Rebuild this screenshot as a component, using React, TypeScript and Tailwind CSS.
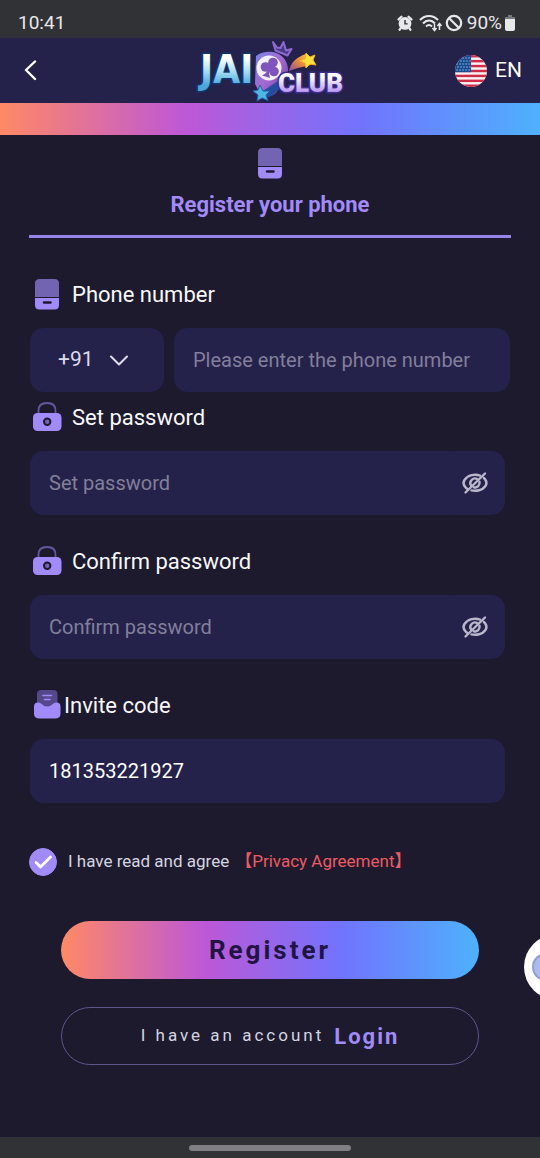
import { useState } from "react";
import type { ReactNode } from "react";

function PhoneIcon() {
  return (
    <svg viewBox="0 0 30 32" className="h-8 w-[30px] shrink-0" aria-hidden="true">
      <path d="M3 19V5.500Q3 1 7.500 1H22.500Q27 1 27 5.500V19Z" fill="#7264b0" />
      <path d="M3 20H27V27Q27 31.500 22.500 31.500H7.500Q3 31.500 3 27Z" fill="#a18bfb" />
      <path d="M12 24.500H18.500" stroke="#1c1a2c" strokeWidth="2.400" strokeLinecap="round" />
    </svg>
  );
}

function LockIcon() {
  return (
    <svg viewBox="0 0 30 32" className="h-8 w-[30px] shrink-0" aria-hidden="true">
      <path d="M6.500 13V9.500C6.500 5 9.500 2 15 2S23.500 5 23.500 9.500V13" fill="none" stroke="#6357a0" strokeWidth="1.800" />
      <rect x="1" y="12" width="28.500" height="18" rx="4.500" fill="#a18bfb" />
      <circle cx="15.200" cy="20.800" r="3.200" fill="#7264b0" stroke="#1c1a2c" strokeWidth="2" />
    </svg>
  );
}

function InviteIcon() {
  return (
    <svg viewBox="0 0 30 32" className="h-8 w-[30px] shrink-0" aria-hidden="true">
      <path d="M5 22V5Q5 1 9.500 1H21Q25.500 1 25.500 5V22Z" fill="#54488b" />
      <path d="M11 6.500H19.500M12.500 10.500H18" stroke="#a18bfb" strokeWidth="1.600" strokeLinecap="round" />
      <path d="M2 17.500Q2 13.500 6 13.500C10 13.500 10.500 17.500 15.200 17.500S20.500 13.500 24.500 13.500Q28.500 13.500 28.500 17.500V24.500Q28.500 29.500 23 29.500H7.500Q2 29.500 2 24.500Z" fill="#a18bfb" />
    </svg>
  );
}

function HiddenEyeIcon() {
  return (
    <svg viewBox="0 0 28 24" className="h-6 w-7" fill="none" stroke="#b9b7ca" strokeWidth="2.400" strokeLinecap="round" aria-hidden="true">
      <path d="M19 4.600C14 2.800 7 3.800 3.500 9Q1.500 12 3.500 15Q4.700 16.800 6.300 18M10.500 19.400C15 20.400 21.500 19.500 24.500 15Q26.500 12 24.500 9Q23.800 7.900 22.800 7" />
      <path d="M16.500 8.300A4.600 4.600 0 0 0 10 14.500M12.800 16.300A4.600 4.600 0 0 0 18.500 10.800" />
      <path d="M4.500 21.500L24 2.500" />
    </svg>
  );
}

function Logo() {
  return (
    <svg viewBox="0 2 160 65" className="h-[65px] w-40" role="img" aria-label="Jai Club">
      <defs>
        <linearGradient id="jai" x1="0" y1="0" x2="0" y2="1">
          <stop offset="0.250" stopColor="#ffffff" />
          <stop offset="0.550" stopColor="#a5dcf3" />
          <stop offset="0.850" stopColor="#4aa5dc" />
        </linearGradient>
        <linearGradient id="club" x1="0" y1="0" x2="0" y2="1">
          <stop offset="0.300" stopColor="#ffffff" />
          <stop offset="0.850" stopColor="#b08af0" />
        </linearGradient>
        <linearGradient id="badge" x1="0" y1="0" x2="1" y2="1">
          <stop offset="0" stopColor="#7884ec" />
          <stop offset="0.500" stopColor="#a568cf" />
          <stop offset="1" stopColor="#4d3ca0" />
        </linearGradient>
        <linearGradient id="comet" x1="1" y1="0" x2="0" y2="1">
          <stop offset="0" stopColor="#ffcf2e" />
          <stop offset="0.500" stopColor="#e78a3e" />
          <stop offset="1" stopColor="#8e4ba0" />
        </linearGradient>
      </defs>
      <path d="M63 20Q70 15 80 16C90 18 95 26 95 34C94 43 88 49 83 57Q76 63 68 59L62 48Z" fill="url(#badge)" />
      <path d="M70 55L85 45L86 53L79 60L71 62Z" fill="#284c9c" />
      <text x="7" y="47" fontFamily="'DejaVu Sans Condensed', 'DejaVu Sans', sans-serif" fontWeight="700" fontSize="39" fill="url(#jai)" stroke="#12356e" strokeWidth="3" paintOrder="stroke" strokeLinejoin="round">JAI</text>
      <circle cx="76" cy="32" r="12.500" fill="#f4efff" />
      <g fill="#8054bd">
        <circle cx="80" cy="26.500" r="4.800" />
        <circle cx="72.500" cy="31" r="4.800" />
        <circle cx="81" cy="35.500" r="4.800" />
        <path d="M76 29L80 31L76 37L77 42L69 39.500Q74 37 75 33Z" />
      </g>
      <path d="M80 6L82.500 14.500L94.500 19.500L98.500 13L93 14.500L90.500 6L87.500 12L84 11.500Z" fill="#4c3888" stroke="#8d68cf" strokeWidth="2" strokeLinejoin="round" />
      <path d="M96 35Q98 23 113 18L118 29Q107 31 96 35Z" fill="url(#comet)" />
      <path d="M113 17L117 21L122 19L120 24L123 29L117 28L113 32L112 27L107 25L112 23Z" fill="#ffe33d" stroke="#f6b323" strokeWidth="1" strokeLinejoin="round" />
      <text x="85" y="56" fontFamily="Roboto, sans-serif" fontWeight="900" fontSize="26" fill="url(#club)" stroke="#3c2d8f" strokeWidth="3" paintOrder="stroke" strokeLinejoin="round">CLUB</text>
      <path d="M67 49L70 55L77 55L73 59L75 64.500L69 62L64 65L65 59L60 55L65 54Z" fill="#4db7e3" stroke="#245fae" strokeWidth="1" strokeLinejoin="round" />
    </svg>
  );
}

const stripes = [0, 2, 4, 6, 8, 10, 12];
const stars = [3, 6, 9, 12, 15];

function FlagIcon() {
  return (
    <svg viewBox="0 0 32 32" className="size-8" aria-hidden="true">
      <defs>
        <clipPath id="disc">
          <circle cx="16" cy="16" r="16" />
        </clipPath>
      </defs>
      <g clipPath="url(#disc)">
        <rect width="32" height="32" fill="#f8f1f5" />
        {stripes.map((n) => (
          <rect key={n} y={n * 2.46} width="32" height="2.460" fill="#d02c48" />
        ))}
        <rect width="16" height="17.200" fill="#164a91" />
        {stars.map((y) =>
          stars.map((x) => <circle key={`${x}-${y}`} cx={x - (y % 2)} cy={y} r="0.700" fill="#a9cbec" />)
        )}
      </g>
    </svg>
  );
}

function StatusBar() {
  return (
    <div className="flex h-[38px] items-center justify-between bg-[#313236] pt-2 pr-6 pl-[18px] text-[#e8e8ea]">
      <span className="text-[19px] leading-6">10:41</span>
      <div className="flex items-center gap-[2px]">
        <svg viewBox="0 0 18 18" className="mr-1 size-4" aria-hidden="true">
          <path d="M1.800 5L5 2M16.200 5L13 2M4 15L3 16.500M14 15L15 16.500" stroke="currentColor" strokeWidth="2.600" strokeLinecap="round" />
          <circle cx="9" cy="9.500" r="7.200" fill="currentColor" />
          <path d="M9 5.500V10H12" fill="none" stroke="#313236" strokeWidth="1.600" />
        </svg>
        <svg viewBox="0 0 24 18" className="h-[18px] w-6" fill="none" stroke="currentColor" strokeWidth="2" aria-hidden="true">
          <path d="M1 6C6 .5 14 .5 19 6M4 9.500C7.500 5.500 12.500 5.500 16 9.500M7 12.500C9 10.500 11 10.500 13 12.500" />
          <path d="M15.500 10V16M13.500 14L15.500 16.500L17.500 14M20.500 16V10M18.500 12L20.500 9.500L22.500 12" strokeWidth="1.500" />
        </svg>
        <svg viewBox="0 0 18 18" className="size-[18px]" fill="none" stroke="currentColor" strokeWidth="2.200" aria-hidden="true">
          <circle cx="9" cy="9" r="7.200" />
          <path d="M4 4L14 14" />
        </svg>
        <span className="ml-[2px] text-[19px] leading-6">90%</span>
        <svg viewBox="0 0 12 18" className="h-[18px] w-3" aria-hidden="true">
          <path d="M4 1H8V3H11V6H1V3H4Z" fill="#77787b" />
          <path d="M1 5H11V15Q11 17 9 17H3Q1 17 1 15Z" fill="currentColor" />
        </svg>
      </div>
    </div>
  );
}

const fieldBox = "h-16 w-full rounded-[14px] bg-[#24224b] px-[19px] text-[20px] text-white outline-none placeholder:text-[#827f9a]";

function FieldLabel({ id, icon, tight, children }: { id: string; icon: ReactNode; tight?: boolean; children: ReactNode }) {
  return (
    <label htmlFor={id} className={`mb-[18px] flex h-8 items-center pl-[2px] text-[22px] text-[#f7f7fa] ${tight ? "gap-[2px]" : "gap-[10px]"}`}>
      {icon}
      {children}
    </label>
  );
}

function PasswordField({ id, label }: { id: string; label: string }) {
  const [shown, setShown] = useState(false);
  return (
    <div className="pr-[5px]">
      <FieldLabel id={id} icon={<LockIcon />}>{label}</FieldLabel>
      <div className="flex items-center rounded-[14px] bg-[#24224b] pr-4">
        <input id={id} type={shown ? "text" : "password"} placeholder={label} className={fieldBox} />
        <button type="button" aria-label="Toggle password visibility" onClick={() => setShown(!shown)}>
          <HiddenEyeIcon />
        </button>
      </div>
    </div>
  );
}

const rainbow = "bg-[linear-gradient(90deg,#ff8965_0%,#be58d6_34%,#7173fd_67%,#4eb1fd_100%)]";

export default function App() {
  return (
    <div className="relative flex min-h-screen flex-col overflow-hidden bg-[#1c1a2c] font-['Roboto',sans-serif]">
      <StatusBar />
      <header className="grid h-[65px] grid-cols-[1fr_auto_1fr] items-center bg-[#24224b] pr-[18px] pl-[23px]">
        <button type="button" aria-label="Back" className="justify-self-start">
          <svg viewBox="0 0 16 22" className="h-[22px] w-4" fill="none" stroke="#fff" strokeWidth="2.400" strokeLinecap="round" strokeLinejoin="round" aria-hidden="true">
            <path d="M12 1.500L3 10L12 19" />
          </svg>
        </button>
        <Logo />
        <button type="button" className="flex items-center gap-2 justify-self-end text-[21px] text-white">
          <FlagIcon />
          EN
        </button>
      </header>
      <div className={`h-8 ${rainbow}`} />

      <main className="flex-1 px-[30px] pt-3">
        <h1 className="-mx-px flex flex-col items-center gap-3 border-b-[3px] border-[#9684e8] pb-4 text-[22px] leading-7 font-bold text-[#a18bfb]">
          <PhoneIcon />
          Register your phone
        </h1>

        <form className="mt-10" onSubmit={(e) => e.preventDefault()}>
          <FieldLabel id="phone" icon={<PhoneIcon />}>Phone number</FieldLabel>
          <div className="flex gap-[10px]">
            <div className="relative w-[134px] shrink-0">
              <select aria-label="Country code" className="h-16 w-full appearance-none rounded-[14px] bg-[#24224b] pl-7 text-[21px] text-[#dddce8] outline-none">
                <option>+91</option>
              </select>
              <svg viewBox="0 0 20 12" className="pointer-events-none absolute top-[27px] right-9 h-3 w-5" fill="none" stroke="#dddce8" strokeWidth="2" strokeLinecap="round" strokeLinejoin="round" aria-hidden="true">
                <path d="M3 1.500L11 9.500L19 1.500" />
              </svg>
            </div>
            <input id="phone" type="tel" placeholder="Please enter the phone number" className={fieldBox} />
          </div>

          <div className="mt-[9px] flex flex-col gap-[30px]">
            <PasswordField id="password" label="Set password" />
            <PasswordField id="confirm" label="Confirm password" />
            <div className="pr-[5px]">
              <FieldLabel id="invite" icon={<InviteIcon />} tight>Invite code</FieldLabel>
              <input id="invite" type="text" defaultValue="181353221927" className={fieldBox} />
            </div>
          </div>

          <div className="-ml-px mt-11 flex h-[30px] items-center">
            <label className="flex items-center gap-[11px] text-[17px] text-[#d6d5e0]">
              <span className="relative size-7">
                <input type="checkbox" defaultChecked className="peer block size-7 appearance-none rounded-full border border-[#a18bfb] checked:bg-[#a18bfb]" />
                <svg viewBox="0 0 28 28" className="pointer-events-none absolute inset-0 hidden size-7 peer-checked:block" fill="none" stroke="#fff" strokeWidth="2.800" strokeLinecap="round" strokeLinejoin="round" aria-hidden="true">
                  <path d="M7 14.500L11.500 19L21.500 9" />
                </svg>
              </span>
              I have read and agree
            </label>
            <a href="#privacy" className="ml-[6px] font-['Roboto','Noto_Sans_CJK_SC',sans-serif] text-[17px] text-[#ee5a64]">【Privacy Agreement】</a>
          </div>

          <div className="mt-11 flex flex-col gap-7 px-[31px]">
            <button type="submit" className={`h-[58px] rounded-full text-[26px] font-bold tracking-[3px] text-[#1f1540] ${rainbow}`}>
              Register
            </button>
            <a href="#login" className="flex h-[58px] items-center justify-center gap-[10px] rounded-full border border-[#5f5590] text-[17px] tracking-[3px] text-[#d6d5e0]">
              I have an account
              <span className="text-[22px] font-bold tracking-[2px] text-[#a18bfb]">Login</span>
            </a>
          </div>
        </form>
      </main>

      <button type="button" aria-label="Customer service" className="absolute top-[934px] -right-[50px] flex size-[66px] items-center rounded-full bg-white pl-2">
        <span className="block h-7 w-[50px] rounded-full border-2 border-[#8fa0d4] bg-[linear-gradient(90deg,#a7bbed,#dcc9f5)]" />
      </button>

      <footer className="flex h-[21px] items-center justify-center bg-[#313236]">
        <div className="h-[6px] w-[162px] rounded-full bg-[#808084]" />
      </footer>
    </div>
  );
}
